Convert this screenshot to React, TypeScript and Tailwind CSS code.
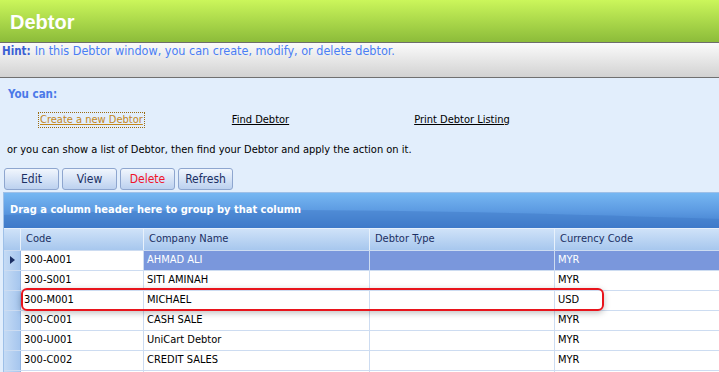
import React from "react";

const rows = [
    { code: "300-A001", name: "AHMAD ALI", type: "", cur: "MYR" },
    { code: "300-S001", name: "SITI AMINAH", type: "", cur: "MYR" },
    { code: "300-M001", name: "MICHAEL", type: "", cur: "USD" },
    { code: "300-C001", name: "CASH SALE", type: "", cur: "MYR" },
    { code: "300-U001", name: "UniCart Debtor", type: "", cur: "MYR" },
    { code: "300-C002", name: "CREDIT SALES", type: "", cur: "MYR" },
    { code: "", name: "", type: "", cur: "" },
];

const font = { fontFamily: '"DejaVu Sans Condensed", "DejaVu Sans", Tahoma, sans-serif' };

const ToolButton = ({ label, danger }: { label: string; danger?: boolean }) => (
    <button className={`h-[22px] w-[55px] rounded-[3px] border border-[#8ea6cf] bg-gradient-to-b from-[#f1f6fd] to-[#bcd1ef] text-[12px] ${danger ? "text-[#f0142a]" : "text-[#1b2f63]"}`}>
        {label}
    </button>
);

const App = () => {
    return (
        <div className="w-[719px] h-[372px] overflow-hidden bg-[#e2eefc] text-[11px]" style={font}>
            {/* title bar */}
            <div className="h-[43px] bg-gradient-to-b from-[#cbf65b] to-[#8cbc3a] flex items-center pl-[10px] border-b border-[#6d6d6d]">
                <span className="text-white font-bold text-[20px] pt-[2px]" style={{ fontFamily: '"Liberation Sans", Arial, sans-serif' }}>Debtor</span>
            </div>

            {/* hint */}
            <div className="h-[35px] bg-gradient-to-b from-[#fbfbfb] to-[#d2d2d2] border-b border-[#707070] pl-[2px] leading-[14px] pt-[1px]">
                <span className="font-bold text-[#3b5fd4] text-[11.5px]">Hint:</span>
                <span className="text-[#4a7ef5] ml-[4px] text-[12.5px]">In this Debtor window, you can create, modify, or delete debtor.</span>
            </div>

            {/* options */}
            <div className="px-[8px] pt-[8px]">
                <div className="font-bold text-[#4b79e8] text-[11.5px]">You can:</div>
                <div className="flex items-center mt-[8px] h-[17px] whitespace-nowrap">
                    <span className="ml-[30px] border border-dotted border-[#9a6a10] px-[1px] text-[#c3871b] underline leading-[14px]">Create a new Debtor </span>
                    <span className="ml-[87px] text-black underline">Find Debtor</span>
                    <span className="ml-[125px] text-black underline">Print Debtor Listing</span>
                </div>
                <div className="mt-[14px] -ml-[1px] text-black">or you can show a list of Debtor, then find your Debtor and apply the action on it.</div>
            </div>

            {/* toolbar */}
            <div className="flex gap-[3px] pl-[4px] mt-[9px]">
                <ToolButton label="Edit" />
                <ToolButton label="View" />
                <ToolButton label="Delete" danger />
                <ToolButton label="Refresh" />
            </div>

            {/* grid */}
            <div className="relative ml-[3px] mt-[2px] border-t border-l border-[#9ec0e8] bg-white">
                <div className="relative h-[35px] overflow-hidden bg-gradient-to-b from-[#76b7f2] via-[#5d9be2] to-[#3f7ccc] flex items-center pl-[6px]">
                    <svg className="absolute inset-0" width="716" height="35" viewBox="0 0 716 35" preserveAspectRatio="none">
                        <path d="M0 22 C 200 14, 420 16, 716 26 L 716 35 L 0 35 Z" fill="#3e78c6" opacity="0.45" />
                    </svg>
                    <span className="relative font-bold text-white text-[11px]">Drag a column header here to group by that column</span>
                </div>
                <div className="flex h-[22px] bg-gradient-to-b from-[#cfe2f8] to-[#a7c7ee] border-t border-[#e6f0fb] text-[#1b2f63]">
                    <div className="w-[17px] border-r border-[#e8f1fb]" />
                    <div className="w-[123px] border-r border-[#e8f1fb] pl-[5px] flex items-center">Code</div>
                    <div className="w-[226px] border-r border-[#e8f1fb] pl-[5px] flex items-center">Company Name</div>
                    <div className="w-[185px] border-r border-[#e8f1fb] pl-[5px] flex items-center">Debtor Type</div>
                    <div className="flex-1 pl-[5px] flex items-center">Currency Code</div>
                </div>
                {rows.map((r, i) => {
                    const sel = i === 0;
                    return (
                        <div key={i} className="flex h-[20px] border-t border-[#cddcf1] text-black">
                            <div className="w-[17px] border-r border-[#8fb2e0] bg-gradient-to-r from-[#c5dbf5] to-[#a6c6ee] flex items-center justify-center">
                                {sel && (
                                    <svg width="5" height="8" viewBox="0 0 5 8">
                                        <path d="M0 0 L5 4 L0 8 Z" fill="#1b2f63" />
                                    </svg>
                                )}
                            </div>
                            <div className="w-[123px] border-r border-[#cddcf1] pl-[3px] flex items-center">{r.code}</div>
                            <div className={`w-[226px] border-r border-[#cddcf1] pl-[3px] flex items-center ${sel ? "bg-[#7a97dc] text-white" : ""}`}>{r.name}</div>
                            <div className={`w-[185px] border-r border-[#cddcf1] pl-[3px] flex items-center ${sel ? "bg-[#7a97dc] text-white" : ""}`}>{r.type}</div>
                            <div className={`flex-1 pl-[3px] flex items-center ${sel ? "bg-[#7a97dc] text-white" : ""}`}>{r.cur}</div>
                        </div>
                    );
                })}

                {/* annotation */}
                <div className="absolute left-[17px] top-[95px] w-[583px] h-[23px] rounded-[6px] border-2 border-[#e8141c] shadow-[0_2px_6px_rgba(0,0,0,0.25)]" />
            </div>
        </div>
    );
};

export default App;
